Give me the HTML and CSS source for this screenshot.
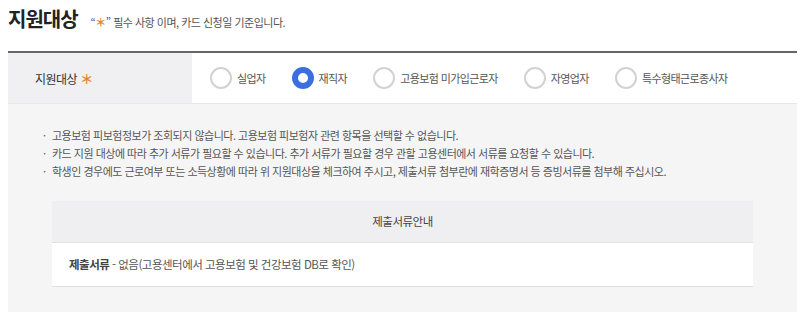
FILE: index.html
```html
<!DOCTYPE html>
<html lang="ko">
<head>
    <meta charset="UTF-8">
    <meta name="viewport" content="width=device-width, initial-scale=1.0">
    <title>지원대상</title>
    <link rel="stylesheet" href="styles.css">
</head>
<body>
    <div class="section">
        <!-- Title -->
        <div class="section-head">
            <h2 class="section-title">지원대상</h2>
            <p class="section-desc">“<span class="star">＊</span>” 필수 사항 이며, 카드 신청일 기준입니다.</p>
        </div>

        <!-- Form row -->
        <div class="form-table">
            <div class="form-row">
                <div class="form-label">지원대상 <span class="star">＊</span></div>
                <div class="form-field">
                    <label class="radio"><span class="radio-mark"></span>실업자</label>
                    <label class="radio checked"><span class="radio-mark"></span>재직자</label>
                    <label class="radio"><span class="radio-mark"></span>고용보험 미가입근로자</label>
                    <label class="radio"><span class="radio-mark"></span>자영업자</label>
                    <label class="radio"><span class="radio-mark"></span>특수형태근로종사자</label>
                </div>
            </div>
        </div>

        <!-- Info box -->
        <div class="info-box">
            <ul class="notes">
                <li>고용보험 피보험정보가 조회되지 않습니다. 고용보험 피보험자 관련 항목을 선택할 수 없습니다.</li>
                <li>카드 지원 대상에 따라 추가 서류가 필요할 수 있습니다. 추가 서류가 필요할 경우 관할 고용센터에서 서류를 요청할 수 있습니다.</li>
                <li>학생인 경우에도 근로여부 또는 소득상황에 따라 위 지원대상을 체크하여 주시고, 제출서류 첨부란에 재학증명서 등 증빙서류를 첨부해 주십시오.</li>
            </ul>

            <div class="doc-table">
                <div class="doc-head">제출서류안내</div>
                <div class="doc-body"><strong>제출서류</strong> - 없음(고용센터에서 고용보험 및 건강보험 DB로 확인)</div>
            </div>
        </div>
    </div>
</body>
</html>
```

FILE: styles.css
```css
/* styles.css */
body {
    margin: 0;
    padding: 0;
    font-family: "Noto Sans CJK KR", "Noto Sans", sans-serif;
    color: #333;
    background-color: #fff;
}

.section {
    padding: 0 8px;
}

/* Title */
.section-head {
    display: flex;
    align-items: baseline;
    height: 51px;
    padding-top: 4px;
    box-sizing: border-box;
}

.section-title {
    margin: 0;
    font-size: 20px;
    font-weight: 700;
    letter-spacing: -1px;
    color: #222;
}

.section-desc {
    margin: 0 0 0 13px;
    font-size: 11px;
    letter-spacing: -0.5px;
    color: #555;
}

.star {
    color: #e8822a;
    font-weight: 700;
}

/* Form row */
.form-table {
    border-top: 2px solid #666;
    border-bottom: 1px solid #e6e6e6;
}

.form-row {
    display: flex;
    height: 50px;
}

.form-label {
    width: 157px;
    padding-left: 27px;
    display: flex;
    align-items: center;
    background-color: #f0f0f2;
    font-size: 12px;
    letter-spacing: -0.5px;
    color: #333;
}

.form-label .star {
    margin-left: 3px;
    font-size: 13px;
}

.form-field {
    display: flex;
    align-items: center;
    padding-left: 18px;
}

.radio {
    display: flex;
    align-items: center;
    margin-right: 26px;
    font-size: 11px;
    letter-spacing: -0.6px;
    color: #555;
    cursor: pointer;
}

.radio-mark {
    width: 18px;
    height: 18px;
    border: 2px solid #d2d2d2;
    border-radius: 50%;
    margin-right: 5px;
    background: #fff;
}

.radio.checked .radio-mark {
    border: 6px solid #3b6fe0;
    width: 10px;
    height: 10px;
}

/* Info box */
.info-box {
    background-color: #f5f5f5;
    padding: 22px 44px 26px 44px;
    height: 160px;
}

.notes {
    margin: 0 0 21px -9px;
    padding: 0;
    list-style: none;
}

.notes li {
    position: relative;
    padding-left: 9px;
    font-size: 11px;
    line-height: 18px;
    letter-spacing: -0.5px;
    color: #555;
}

.notes li::before {
    content: "·";
    position: absolute;
    left: 0;
    top: 0;
}

.doc-table {
    border-bottom: 1px solid #e0e0e0;
}

.doc-head {
    height: 41px;
    line-height: 41px;
    text-align: center;
    background-color: #efeff1;
    border-bottom: 1px solid #e0e0e0;
    font-size: 11.5px;
    letter-spacing: -0.5px;
    color: #444;
}

.doc-body {
    height: 43px;
    line-height: 43px;
    padding-left: 17px;
    background-color: #fff;
    font-size: 11.5px;
    letter-spacing: -0.5px;
    color: #555;
}

.doc-body strong {
    color: #444;
}
```
